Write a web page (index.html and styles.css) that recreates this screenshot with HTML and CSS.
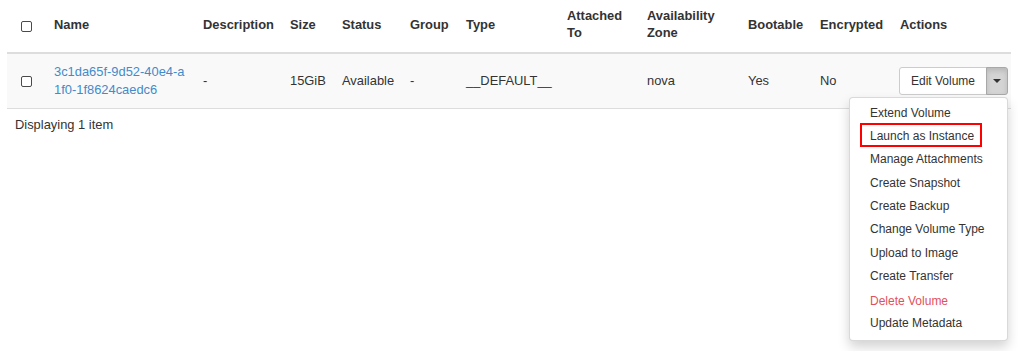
FILE: index.html
```html
<!DOCTYPE html>
<html>
<head>
<meta charset="utf-8">
<link rel="stylesheet" href="styles.css">
</head>
<body>
<div class="page">
  <table class="tbl">
    <colgroup>
      <col style="width:39px"><col style="width:149px"><col style="width:87px"><col style="width:52px">
      <col style="width:68px"><col style="width:56px"><col style="width:101px"><col style="width:80px">
      <col style="width:101px"><col style="width:72px"><col style="width:80px"><col style="width:119px">
    </colgroup>
    <thead>
      <tr>
        <th class="chk-cell"><span class="chk"></span></th>
        <th>Name</th>
        <th>Description</th>
        <th>Size</th>
        <th>Status</th>
        <th>Group</th>
        <th>Type</th>
        <th>Attached To</th>
        <th>Availability Zone</th>
        <th>Bootable</th>
        <th>Encrypted</th>
        <th>Actions</th>
      </tr>
    </thead>
    <tbody>
      <tr>
        <td class="chk-cell"><span class="chk"></span></td>
        <td><a class="link" href="#">3c1da65f-9d52-40e4-a<br>1f0-1f8624caedc6</a></td>
        <td>-</td>
        <td>15GiB</td>
        <td>Available</td>
        <td>-</td>
        <td>__DEFAULT__</td>
        <td></td>
        <td>nova</td>
        <td>Yes</td>
        <td>No</td>
        <td class="act-cell">
          <div class="btn-group">
            <span class="btn">Edit Volume</span><span class="btn toggle"><span class="caret"></span></span>
            <ul class="menu">
              <li>Extend Volume</li>
              <li class="marked">Launch as Instance<span class="mark"></span></li>
              <li>Manage Attachments</li>
              <li>Create Snapshot</li>
              <li>Create Backup</li>
              <li>Change Volume Type</li>
              <li>Upload to Image</li>
              <li>Create Transfer</li>
              <li class="danger">Delete Volume</li>
              <li>Update Metadata</li>
            </ul>
          </div>
        </td>
      </tr>
    </tbody>
  </table>
  <div class="foot">Displaying 1 item</div>
</div>
</body>
</html>
```

FILE: styles.css
```css
html, body {
  margin: 0;
  padding: 0;
  background: #fff;
  height: 100%;
}
body {
  font-family: "Liberation Sans", Arial, sans-serif;
  font-size: 12.9px;
  line-height: 17.2px;
  color: #333;
}
.page {
  padding: 0 7px;
  min-height: 351px;
  box-sizing: border-box;
}
.tbl {
  width: 1004px;
  table-layout: fixed;
  border-collapse: collapse;
  border-spacing: 0;
}
.tbl th {
  text-align: left;
  font-weight: bold;
  vertical-align: middle;
  padding: 7px 8px 11px;
  border-bottom: 2px solid #ddd;
}
.tbl td {
  vertical-align: middle;
  padding: 9px 8px 10px;
  background: #f9f9f9;
  border-bottom: 1px solid #ddd;
  white-space: nowrap;
}
.tbl th.chk-cell {
  padding: 9px 0 8px 14px;
}
.tbl td.chk-cell {
  padding: 10px 0 9px 14px;
}
.chk {
  display: block;
  width: 9px;
  height: 9px;
  border: 1px solid #4a4a4a;
  border-radius: 2px;
  background: #fff;
}
.link {
  color: #428bca;
  text-decoration: none;
}
.tbl td.act-cell {
  padding-left: 7px;
  padding-right: 3px;
}
.btn-group {
  position: relative;
  display: flex;
  font-size: 12px;
}
.btn {
  display: inline-block;
  height: 26px;
  line-height: 26px;
  padding: 0 11px;
  border: 1px solid #ccc;
  background: #fff;
  color: #333;
  border-radius: 3px 0 0 3px;
  white-space: nowrap;
}
.btn.toggle {
  width: 22px;
  padding: 0;
  margin-left: -1px;
  border-color: #a8a8a8;
  background: #d4d4d4;
  border-radius: 0 3px 3px 0;
  box-shadow: inset 0 3px 5px rgba(0,0,0,.125);
  display: flex;
  align-items: center;
  justify-content: center;
}
.caret {
  width: 0;
  height: 0;
  border-top: 4px solid #333;
  border-left: 4px solid transparent;
  border-right: 4px solid transparent;
}
.menu {
  position: absolute;
  top: calc(100% + 2px);
  right: 0;
  width: 157px;
  margin: 0;
  padding: 4px 0 5px;
  list-style: none;
  background: #fff;
  border: 1px solid rgba(0,0,0,.15);
  border-radius: 4px;
  box-shadow: 0 6px 12px rgba(0,0,0,.175);
  z-index: 10;
}
.menu li {
  position: relative;
  padding: 3px 20px;
  line-height: 17.33px;
  color: #333;
  white-space: nowrap;
}
.menu li.danger {
  color: #e2505d;
  padding-top: 5px;
  padding-bottom: 1px;
}
.mark {
  position: absolute;
  left: 10px;
  top: -2px;
  width: 118px;
  height: 20px;
  border: 2px solid #f00;
}
.foot {
  padding: 7px 8px;
}
```
